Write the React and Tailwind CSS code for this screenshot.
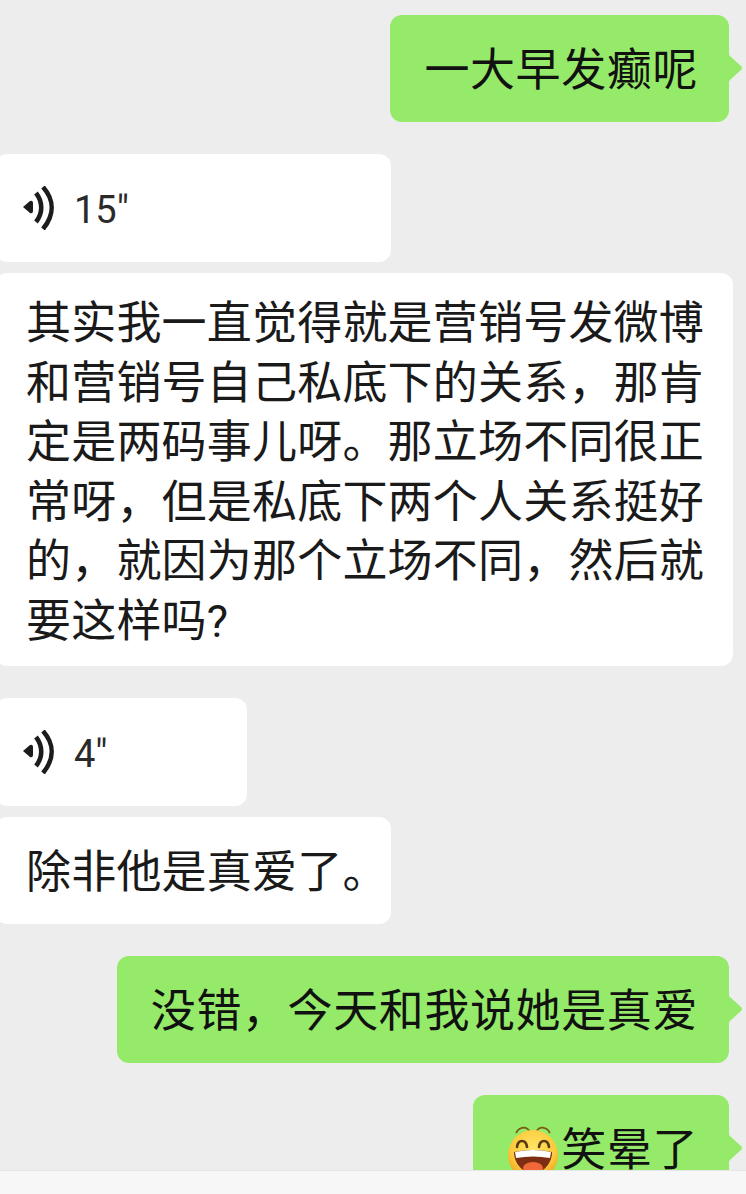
const BUBBLE_GREEN = '#95ea69';

function Tail() {
  return (
    <svg width="15" height="30" viewBox="0 0 15 30" className="absolute left-full top-[38px] -ml-px">
      <path d="M0 0 C1 2 2 3 3 4 L13 13 Q15 15 13 17 L3 26 C2 27 1 28 0 30 Z" fill={BUBBLE_GREEN} />
    </svg>
  );
}

function VoiceIcon() {
  return (
    <svg width="31" height="44" viewBox="0 0 31 44" fill="none" className="shrink-0">
      <path d="M0 21 L7 15 Q10 14 10 17 L10 25 Q10 28 7 27 Z" fill="#1c1c1c" />
      <path d="M13 7 C20 16 20 27 13 36" stroke="#1c1c1c" strokeWidth="4.6" />
      <path d="M20 1 C31.5 14 31.5 29 20 43" stroke="#1c1c1c" strokeWidth="4.6" />
    </svg>
  );
}

function SmileEmoji() {
  return (
    <svg width="52" height="56" viewBox="0 0 52 56" className="inline-block -mt-[12px] align-[-15px] mr-[2px]">
      <defs>
        <radialGradient id="face" cx="50%" cy="35%" r="65%">
          <stop offset="0%" stopColor="#ffe566" />
          <stop offset="70%" stopColor="#fbc93a" />
          <stop offset="100%" stopColor="#f0a020" />
        </radialGradient>
      </defs>
      <path d="M9 8 C13 1 20 1 23 7" stroke="#7a5a12" strokeWidth="1.6" fill="none" />
      <path d="M29 7 C32 1 39 1 43 8" stroke="#7a5a12" strokeWidth="1.6" fill="none" />
      <circle cx="26" cy="30" r="25" fill="url(#face)" />
      <path d="M10 22 C11 14 19 14 20 22" stroke="#5a3a10" strokeWidth="2.6" fill="none" strokeLinecap="round" />
      <path d="M32 22 C33 14 41 14 42 22" stroke="#5a3a10" strokeWidth="2.6" fill="none" strokeLinecap="round" />
      <path d="M7 27 Q26 23 45 27 C45 38 37 48 26 48 C15 48 7 38 7 27 Z" fill="#7c2d12" />
      <path d="M8 27 Q26 23 44 27 L43 33 Q26 30 9 33 Z" fill="#ffffff" />
      <ellipse cx="26" cy="43" rx="10" ry="6" fill="#f0683a" />
    </svg>
  );
}

function RightBubble({ children, className = '' }) {
  return (
    <div className={`relative self-end mr-[17px] shrink-0 h-[107px] pt-[5px] flex items-center rounded-xl bg-[#95ea69] pl-[34px] pr-[31px] tracking-[0.6px] text-[#111] ${className}`}>
      <span className="whitespace-nowrap">{children}</span>
      <Tail />
    </div>
  );
}

function VoiceBubble({ seconds, className = '' }) {
  return (
    <div className={`-ml-[5px] shrink-0 h-[108px] flex items-center rounded-xl bg-white pl-[28px] ${className}`}>
      <VoiceIcon />
      <span className="ml-[20px] pt-[5px] text-[38px] tracking-normal text-[#2a2a2a]">{seconds}"</span>
    </div>
  );
}

export default function App() {
  return (
    <div className="w-[746px] h-[1194px] flex flex-col overflow-hidden bg-[#ededed] font-['Roboto','Noto_Sans_CJK_SC',sans-serif] text-[45px] leading-[59.5px] tracking-[0.2px] text-[#1a1a1a]">
      <div className="flex-1 min-h-0 overflow-hidden flex flex-col pt-[15px]">
        <RightBubble>一大早发癫呢</RightBubble>

        <VoiceBubble seconds="15" className="w-[396px] mt-[32px]" />
        <div className="-ml-[5px] mt-[11px] w-[738px] shrink-0 rounded-xl bg-white pl-[31px] pr-[25px] pt-[21px] pb-[15px]">
          其实我一直觉得就是营销号发微博和营销号自己私底下的关系，那肯定是两码事儿呀。那立场不同很正常呀，但是私底下两个人关系挺好的，就因为那个立场不同，然后就要这样吗?
        </div>

        <VoiceBubble seconds="4" className="w-[252px] mt-[32px]" />
        <div className="-ml-[5px] mt-[11px] w-[396px] h-[107px] pt-[5px] shrink-0 flex items-center rounded-xl bg-white pl-[31px]">
          除非他是真爱了。
        </div>

        <RightBubble className="mt-[32px]">没错，今天和我说她是真爱</RightBubble>
        <RightBubble className="mt-[32px]">
          <SmileEmoji />笑晕了
        </RightBubble>
      </div>
      <div className="h-[24px] shrink-0 bg-[#f7f7f7] border-t border-[#e6e6e6]" />
    </div>
  );
}
